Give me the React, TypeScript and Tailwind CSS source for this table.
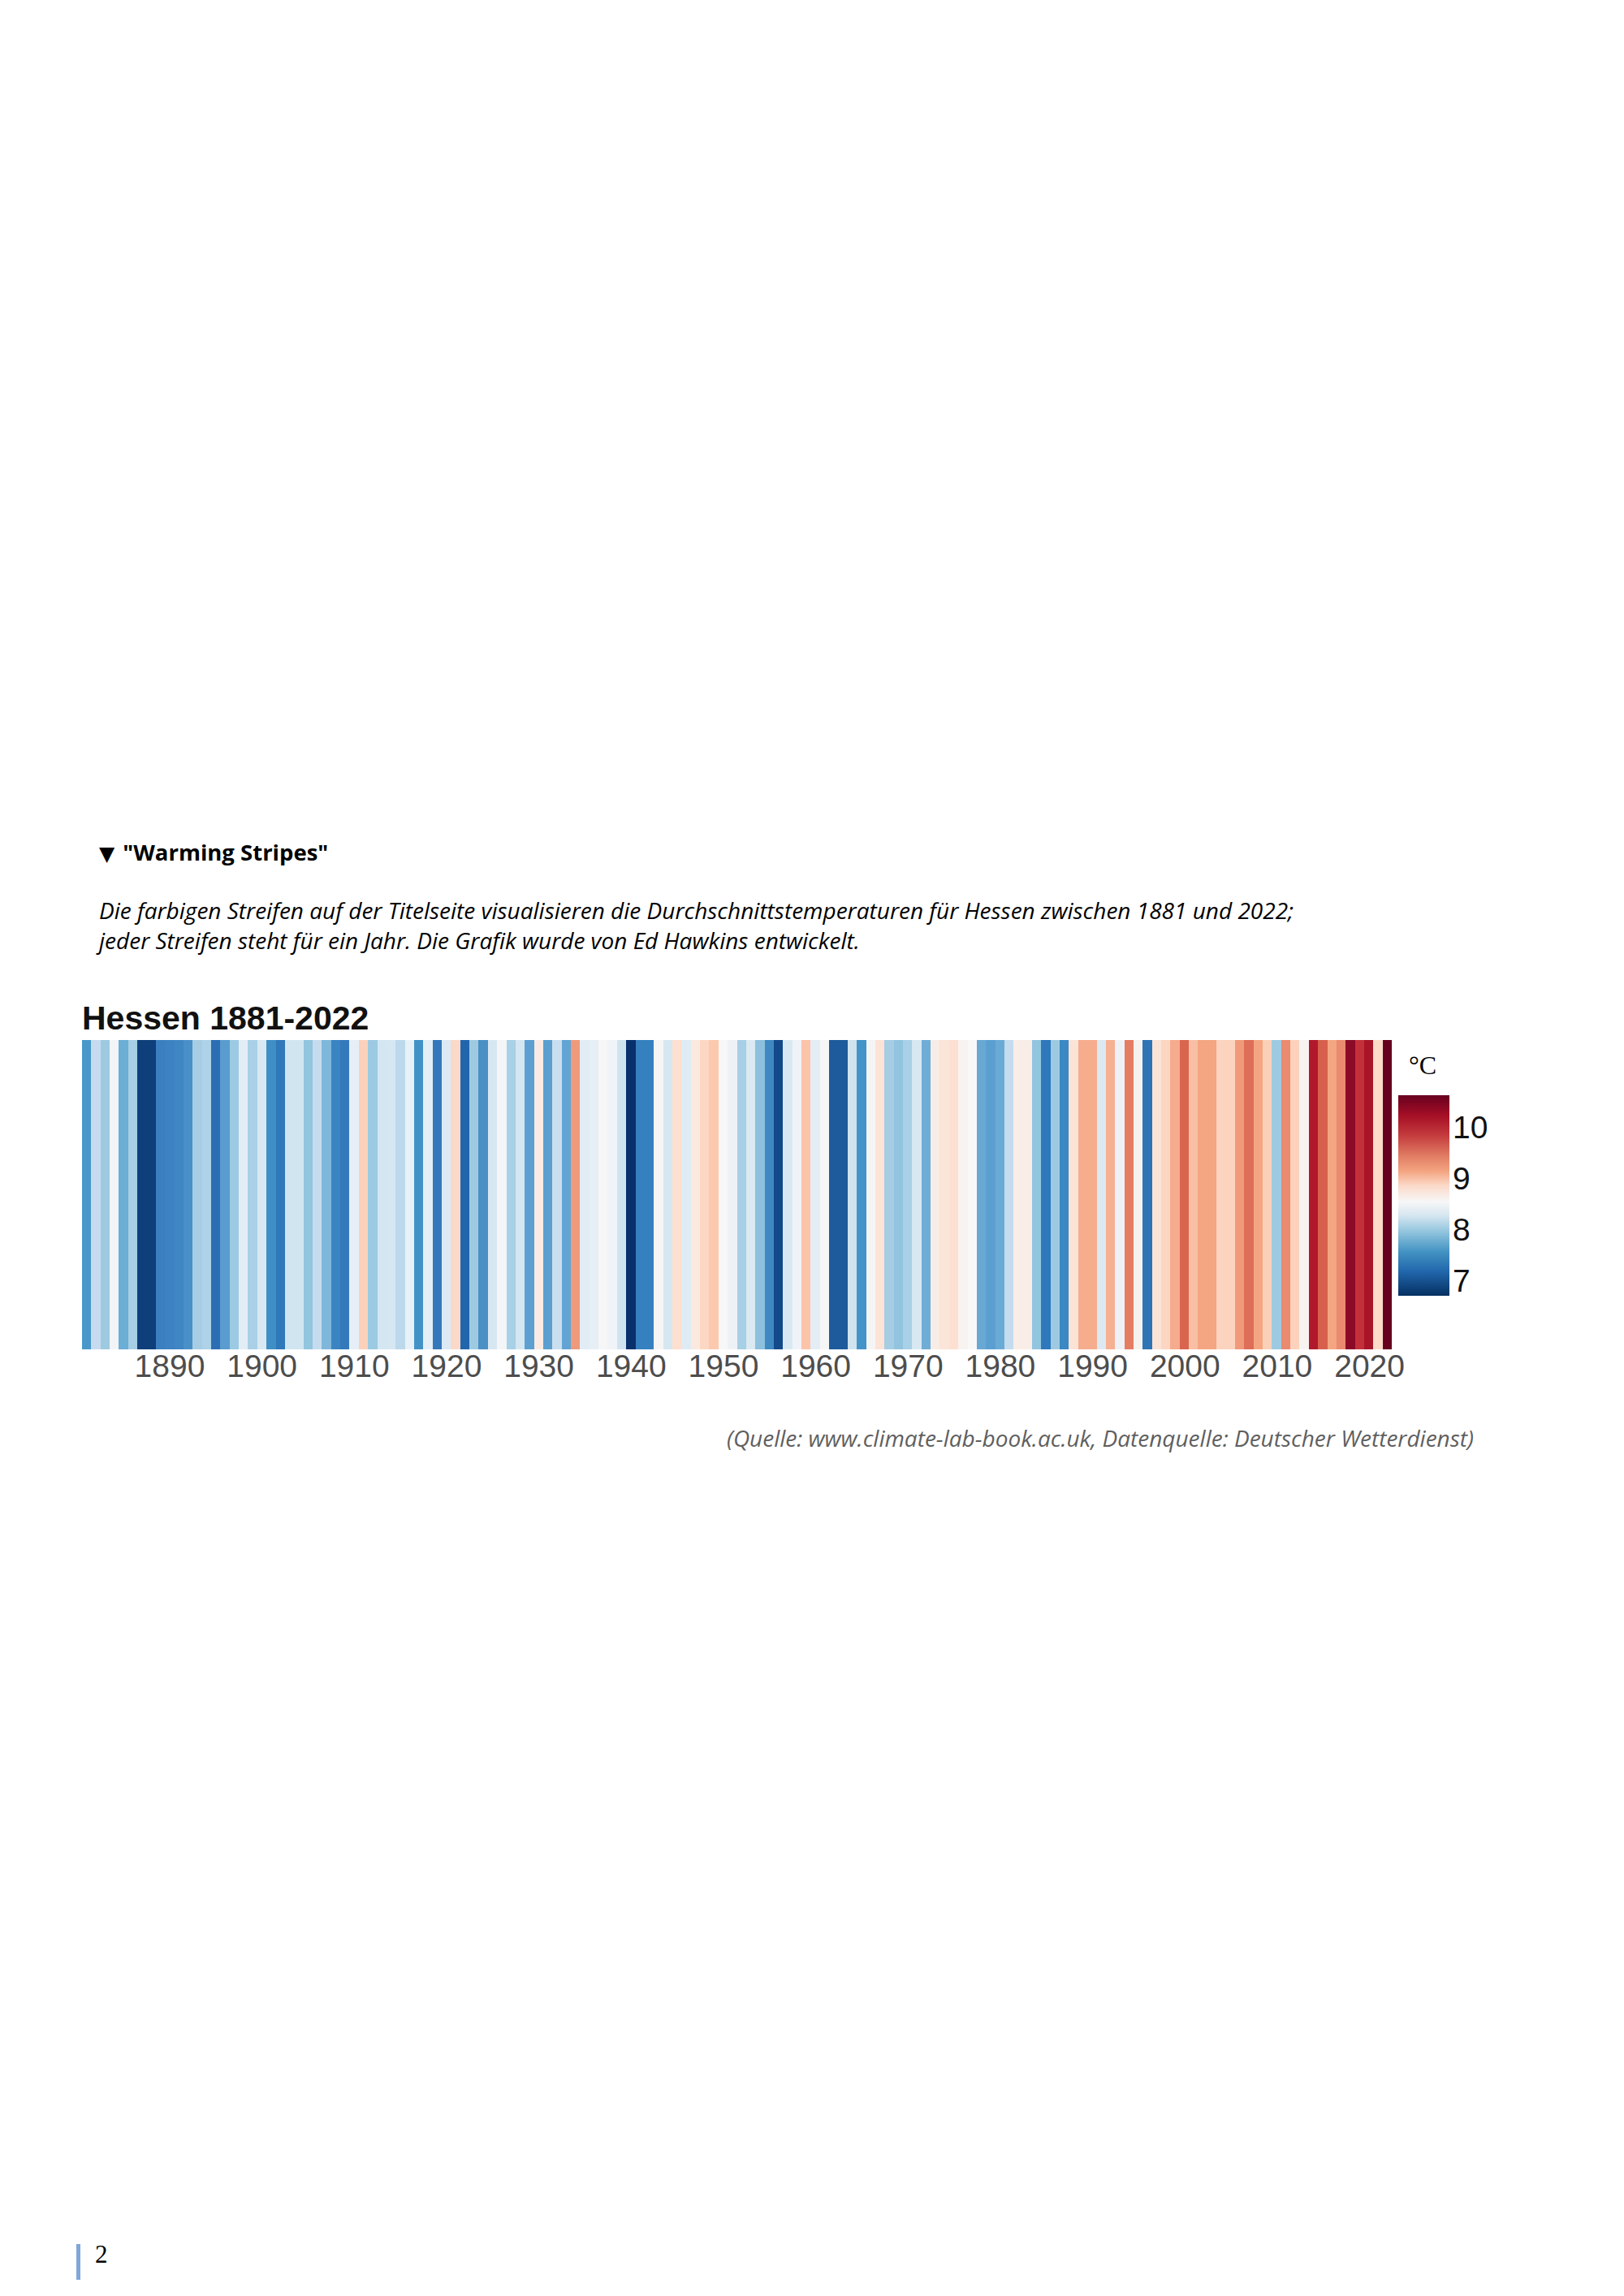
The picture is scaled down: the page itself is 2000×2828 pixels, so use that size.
// Seite 2: Erklärung der "Warming Stripes" für Hessen

const STRIPES = [
  "#4a98c9", "#c6dbef", "#9ecae1", "#f2f4f7", "#6baed6", "#a6cee4", "#0e3f7a", "#0e3f7a", "#3b7fc0", "#3d82c2",
  "#3f86c4", "#4a90c8", "#a6cde4", "#aed2e7", "#2c6db3", "#5a9ccf", "#9ccae2", "#e3edf6", "#a9d0e6", "#d9e8f3",
  "#3f8fc6", "#2f78b9", "#d1e5f0", "#d1e5f0", "#92c5de", "#c6dcee", "#7fb7da", "#3a84c2", "#3479bc", "#e6eff7",
  "#fcd1bc", "#9ccae2", "#d3e6f2", "#d6e7f2", "#bcd8eb", "#e9f1f8", "#4292c6", "#e3eef7", "#3478bb", "#dbe9f4",
  "#fbd9c8", "#2166ac", "#9ecae1", "#4a90c4", "#d7e7f2", "#f4f5f6", "#a8d0e6", "#d4e6f2", "#5d9fd0", "#f9ebe3",
  "#5a9fd0", "#c9dff0", "#62a4d3", "#ef9a7a", "#e1ecf5", "#e6eef6", "#f6f6f6", "#f0f4f8", "#d0e4f0", "#08306b",
  "#3580be", "#3580be", "#f5f5f5", "#d6e7f2", "#fde0d0", "#dfebf4", "#fbe9e0", "#fcd8c4", "#fcc9ae", "#f7f7f7",
  "#eef2f6", "#a7cfe5", "#dbe9f3", "#8cc0dd", "#3f88c2", "#124a8a", "#d9e9f3", "#eff3f7", "#fcc3a8", "#e4edf5",
  "#f6f6f6", "#1e5b9c", "#1e5b9c", "#d0e3ef", "#4394c8", "#f5f5f5", "#fde3d6", "#a5cde4", "#92c4df", "#a8d0e6",
  "#d7e8f2", "#6fadd7", "#f8ece6", "#fbe4d8", "#fde0d1", "#f8f3f0", "#f8f8f8", "#6aa8d4", "#5a9fcf", "#6aabd6",
  "#c4dcee", "#f9ede7", "#f9ede7", "#92c5de", "#2f78bb", "#9ecae1", "#3a88c4", "#fbe3d6", "#f5ad8e", "#f5ad8e",
  "#dde9f2", "#f6b193", "#eef2f6", "#e57d62", "#f5f2f0", "#2f74b5", "#fbe3d6", "#fcd6c2", "#f5ab8d", "#d9654f",
  "#f8bfa4", "#f4a582", "#f4a582", "#fbd3bf", "#fbd3bf", "#f09a7b", "#de6e58", "#f4a582", "#fbd0b9", "#9ecae1",
  "#ea8a6f", "#fcd2bd", "#f6f3f1", "#b2182b", "#d6604d", "#f4a582", "#ea8a6f", "#8b0a26", "#c4303a", "#a81529",
  "#fcdcc9", "#67001f",
];

const FIRST_YEAR = 1881;

const App = () => {
  return (
    <div className="w-[2000px] h-[2828px] bg-white flex flex-col pt-[1032px] font-['Open_Sans',sans-serif] text-black">
      {/* Überschrift und Text */}
      <div className="pl-[122px]">
        <h2 className="text-[27.5px] leading-[36px] font-bold">
          <span className="font-['DejaVu_Sans',sans-serif] text-[25px] mr-[10px]">▼</span>"Warming Stripes"
        </h2>
        <p className="mt-[33px] text-[28px] leading-[37px] italic">
          Die farbigen Streifen auf der Titelseite visualisieren die Durchschnittstemperaturen für Hessen zwischen 1881 und 2022;
          <br />
          jeder Streifen steht für ein Jahr. Die Grafik wurde von Ed Hawkins entwickelt.
        </p>
      </div>

      {/* Grafik */}
      <div className="pl-[101px] mt-[57px] font-['Liberation_Sans',Arial,sans-serif]">
        <h3 className="text-[41px] leading-none font-bold text-[#111]">Hessen 1881-2022</h3>
        <div className="flex mt-[6px]">
          <div className="flex flex-col w-[1614px]">
            <div className="flex h-[381px]">
              {STRIPES.map((color, i) => (
                <div key={i} className="flex-1" style={{ backgroundColor: color }} />
              ))}
            </div>
            <div className="grid grid-cols-[repeat(142,minmax(0,1fr))] mt-[1px] text-[39px] leading-none text-[#4d4d4d]">
              {STRIPES.map((_, i) => {
                const year = FIRST_YEAR + i;
                return (
                  <div key={year} className="flex justify-center">
                    {year % 10 === 0 && <span className="whitespace-nowrap">{year}</span>}
                  </div>
                );
              })}
            </div>
          </div>

          {/* Legende */}
          <div className="flex flex-col ml-[7px] mt-[15px]">
            <span className="ml-[13px] font-['Liberation_Serif',serif] text-[32px] leading-none">°C</span>
            <div className="flex mt-[21px]">
              <div className="w-[63px] h-[247px] bg-[linear-gradient(to_bottom,#67001f_0%,#a50f26_10%,#c43b3d_20%,#e07b62_30%,#f4a582_38%,#fbd9c8_45%,#f7f7f7_53%,#d6e6f0_60%,#92c5de_68%,#4393c3_78%,#2166ac_88%,#053061_100%)]" />
              <div className="flex flex-col pt-[8px] ml-[4px] text-[39px] leading-[63px] text-[#111]">
                <span>10</span>
                <span>9</span>
                <span>8</span>
                <span>7</span>
              </div>
            </div>
          </div>
        </div>
      </div>

      {/* Quelle */}
      <p className="mt-[52px] pr-[185px] text-right text-[28px] leading-[34px] italic text-[#5f5f5f]">
        (Quelle: www.climate-lab-book.ac.uk, Datenquelle: Deutscher Wetterdienst)
      </p>

      {/* Seitenzahl */}
      <div className="mt-auto mb-[20px] ml-[94px] flex items-start">
        <div className="w-[5px] h-[44px] bg-[#7fa7d9]" />
        <span className="ml-[18px] -mt-[3px] font-['Liberation_Serif',serif] text-[31px] leading-none">2</span>
      </div>
    </div>
  );
};

export default App;
